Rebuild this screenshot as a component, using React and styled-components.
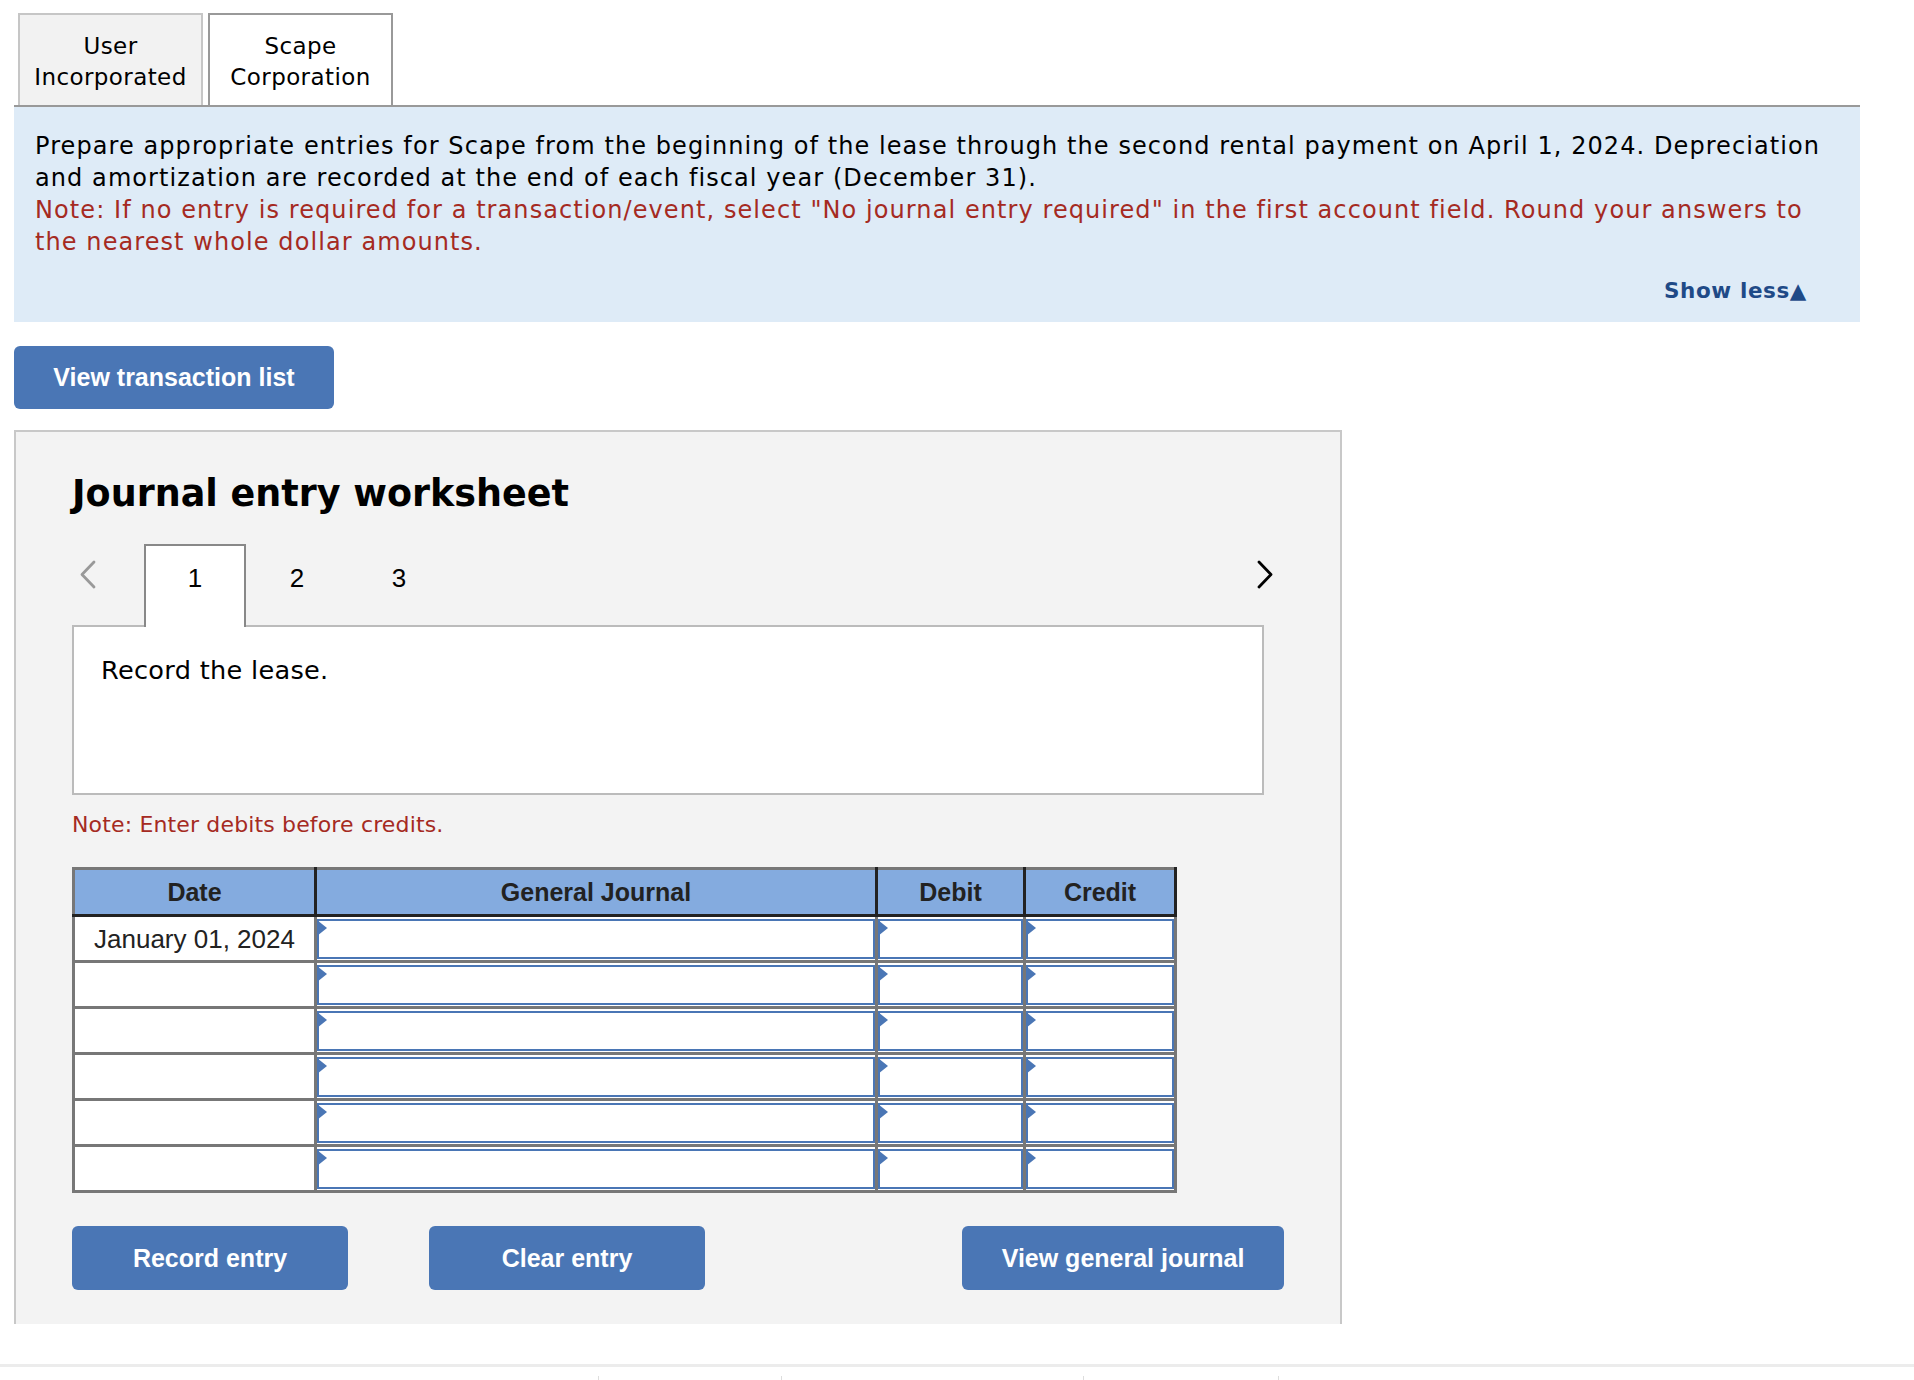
import styled, { createGlobalStyle } from "styled-components";

const GlobalStyle = createGlobalStyle`
    body {
        margin: 0;
        background: #fff;
        color: #000;
        font-family: "DejaVu Sans", Verdana, sans-serif;
    }
    * {
        box-sizing: border-box;
    }
`;

const Page = styled.div`
    width: 1860px;
    padding: 13px 0 0 14px;
`;

const CompanyTabs = styled.div`
    display: flex;
    gap: 5px;
    padding-left: 4px;
    border-bottom: 2px solid #999;
`;

const CompanyTab = styled.button`
    width: 185px;
    height: 92px;
    padding: 3px 0 0;
    border: 2px solid ${({ $active }) => ($active ? "#999" : "#c6c6c6")};
    border-bottom: none;
    background: ${({ $active }) => ($active ? "#fff" : "#f2f2f2")};
    color: #000;
    font-family: "DejaVu Sans", Verdana, sans-serif;
    font-size: 23px;
    line-height: 30.5px;
    letter-spacing: 0.4px;
`;

const Instructions = styled.div`
    background: #deebf7;
    padding: 23px 21px 18px;
`;

const Para = styled.p`
    margin: 0;
    font-size: 24px;
    line-height: 32px;
    letter-spacing: 1.08px;
    color: ${({ $note }) => ($note ? "#a52a22" : "#000")};
`;

const ShowLessRow = styled.div`
    display: flex;
    justify-content: flex-end;
    margin-top: 20px;
    padding-right: 32px;
`;

const ShowLess = styled.button`
    padding: 0;
    border: none;
    background: none;
    color: #1f4a87;
    font-family: "DejaVu Sans", Verdana, sans-serif;
    font-weight: 700;
    font-size: 21.5px;
    line-height: 26px;
    letter-spacing: 0.6px;
`;

const BlueButton = styled.button`
    width: ${({ $width }) => $width}px;
    height: 64px;
    border: none;
    border-radius: 6px;
    background: #4a76b5;
    color: #fff;
    font-family: "Liberation Sans", Arial, sans-serif;
    font-weight: 700;
    font-size: 25px;
`;

const TopButton = styled(BlueButton)`
    margin-top: 24px;
    height: 63px;
`;

const Worksheet = styled.section`
    margin-top: 21px;
    width: 1328px;
    border: 2px solid #c8c8c8;
    border-bottom: none;
    background: #f3f3f3;
    padding: 41px 56px 34px;
`;

const Title = styled.h2`
    margin: 0;
    font-size: 36.5px;
    font-weight: 700;
    line-height: 42px;
`;

const EntryTabs = styled.div`
    position: relative;
    z-index: 1;
    display: flex;
    height: 83px;
    margin-top: 29px;
    margin-bottom: -2px;
    width: 1212px;
`;

const NavButton = styled.button`
    display: flex;
    align-items: flex-start;
    width: ${({ $width }) => $width}px;
    padding: 16px 0 0 ${({ $pad }) => $pad}px;
    border: none;
    background: none;
    color: ${({ $muted }) => ($muted ? "#999" : "#000")};
`;

const EntryTab = styled.div`
    width: 102px;
    padding-top: 17px;
    border: 2px solid ${({ $active }) => ($active ? "#888" : "transparent")};
    border-bottom: none;
    background: ${({ $active }) => ($active ? "#fff" : "transparent")};
    text-align: center;
    font-family: "Liberation Sans", Arial, sans-serif;
    font-size: 26px;
    line-height: 30px;
    color: #000;
`;

const Spacer = styled.div`
    flex: 1;
`;

const RecordBox = styled.div`
    position: relative;
    width: 1192px;
    height: 170px;
    border: 2px solid #bbb;
    background: #fff;
    padding: 28px 27px;
    font-size: 25.6px;
    letter-spacing: 0.3px;
`;

const Note = styled.p`
    margin: 17px 0 0;
    font-size: 22px;
    letter-spacing: 0.15px;
    color: #a52a22;
`;

const JournalTable = styled.table`
    margin-top: 30px;
    width: 1102px;
    border-collapse: collapse;
    table-layout: fixed;
    border: 3px solid #777;
    font-family: "Liberation Sans", Arial, sans-serif;
`;

const Th = styled.th`
    height: 47px;
    padding: 0;
    background: #84abdf;
    border: 3px solid #222;
    border-top-color: #777;
    color: #222;
    font-size: 25px;
    font-weight: 700;
    &:first-child {
        border-left-color: #777;
    }
`;

const Td = styled.td`
    height: 46px;
    padding: 2px 0 0;
    border: 3px solid #777;
    background: #fff;
    text-align: center;
    color: #222;
    font-size: 26px;
`;

const InputTd = styled(Td)`
    padding: 0;
`;

const InputFrame = styled.div`
    position: relative;
    height: 40px;
    border: 2px solid #4a76b5;
    background: #fff;

    &::before {
        content: "";
        position: absolute;
        left: -2px;
        top: -1px;
        border-top: 8px solid transparent;
        border-bottom: 8px solid transparent;
        border-left: 10px solid #4a76b5;
    }
`;

const ActionRow = styled.div`
    display: flex;
    justify-content: space-between;
    margin-top: 33px;
    width: 1212px;
`;

const LeftActions = styled.div`
    display: flex;
    gap: 81px;
`;

const Footer = styled.footer`
    margin-top: 40px;
    border-top: 3px solid #ececec;
    display: flex;
    padding: 9px 0 0 598px;
`;

const FooterItem = styled.div`
    width: ${({ $width }) => $width}px;
    height: 20px;
    border-left: 1px solid #ddd;
`;

function Chevron({ dir }) {
    const points = dir === "left" ? "15,2 3,14.5 15,27" : "3,2 15,14.5 3,27";
    return (
        <svg width="18" height="29" viewBox="0 0 18 29">
            <polyline points={points} fill="none" stroke="currentColor" strokeWidth="2.8" strokeLinecap="round" strokeLinejoin="round" />
        </svg>
    );
}

const rows = ["January 01, 2024", "", "", "", "", ""];

export default function App() {
    return (
        <>
            <GlobalStyle />
            <Page>
                <CompanyTabs>
                    <CompanyTab>User<br />Incorporated</CompanyTab>
                    <CompanyTab $active>Scape<br />Corporation</CompanyTab>
                </CompanyTabs>
                <Instructions>
                    <Para>
                        Prepare appropriate entries for Scape from the beginning of the lease through the second rental payment on April 1, 2024. Depreciation and amortization are recorded at the end of each fiscal year (December 31).
                    </Para>
                    <Para $note>
                        Note: If no entry is required for a transaction/event, select "No journal entry required" in the first account field. Round your answers to the nearest whole dollar amounts.
                    </Para>
                    <ShowLessRow>
                        <ShowLess>Show less▲</ShowLess>
                    </ShowLessRow>
                </Instructions>

                <TopButton $width={320}>View transaction list</TopButton>

                <Worksheet>
                    <Title>Journal entry worksheet</Title>
                    <EntryTabs>
                        <NavButton $width={72} $pad={7} $muted>
                            <Chevron dir="left" />
                        </NavButton>
                        <EntryTab $active>1</EntryTab>
                        <EntryTab>2</EntryTab>
                        <EntryTab>3</EntryTab>
                        <Spacer />
                        <NavButton $width={28} $pad={0}>
                            <Chevron dir="right" />
                        </NavButton>
                    </EntryTabs>
                    <RecordBox>Record the lease.</RecordBox>
                    <Note>Note: Enter debits before credits.</Note>

                    <JournalTable>
                        <colgroup>
                            <col style={{ width: 242 }} />
                            <col style={{ width: 561 }} />
                            <col style={{ width: 148 }} />
                            <col style={{ width: 151 }} />
                        </colgroup>
                        <thead>
                            <tr>
                                <Th>Date</Th>
                                <Th>General Journal</Th>
                                <Th>Debit</Th>
                                <Th>Credit</Th>
                            </tr>
                        </thead>
                        <tbody>
                            {rows.map((date, i) => (
                                <tr key={i}>
                                    <Td>{date}</Td>
                                    <InputTd><InputFrame /></InputTd>
                                    <InputTd><InputFrame /></InputTd>
                                    <InputTd><InputFrame /></InputTd>
                                </tr>
                            ))}
                        </tbody>
                    </JournalTable>

                    <ActionRow>
                        <LeftActions>
                            <BlueButton $width={276}>Record entry</BlueButton>
                            <BlueButton $width={276}>Clear entry</BlueButton>
                        </LeftActions>
                        <BlueButton $width={322}>View general journal</BlueButton>
                    </ActionRow>
                </Worksheet>
            </Page>
            <Footer>
                <FooterItem $width={183} />
                <FooterItem $width={302} />
                <FooterItem $width={195} />
                <FooterItem $width={1} />
            </Footer>
        </>
    );
}
